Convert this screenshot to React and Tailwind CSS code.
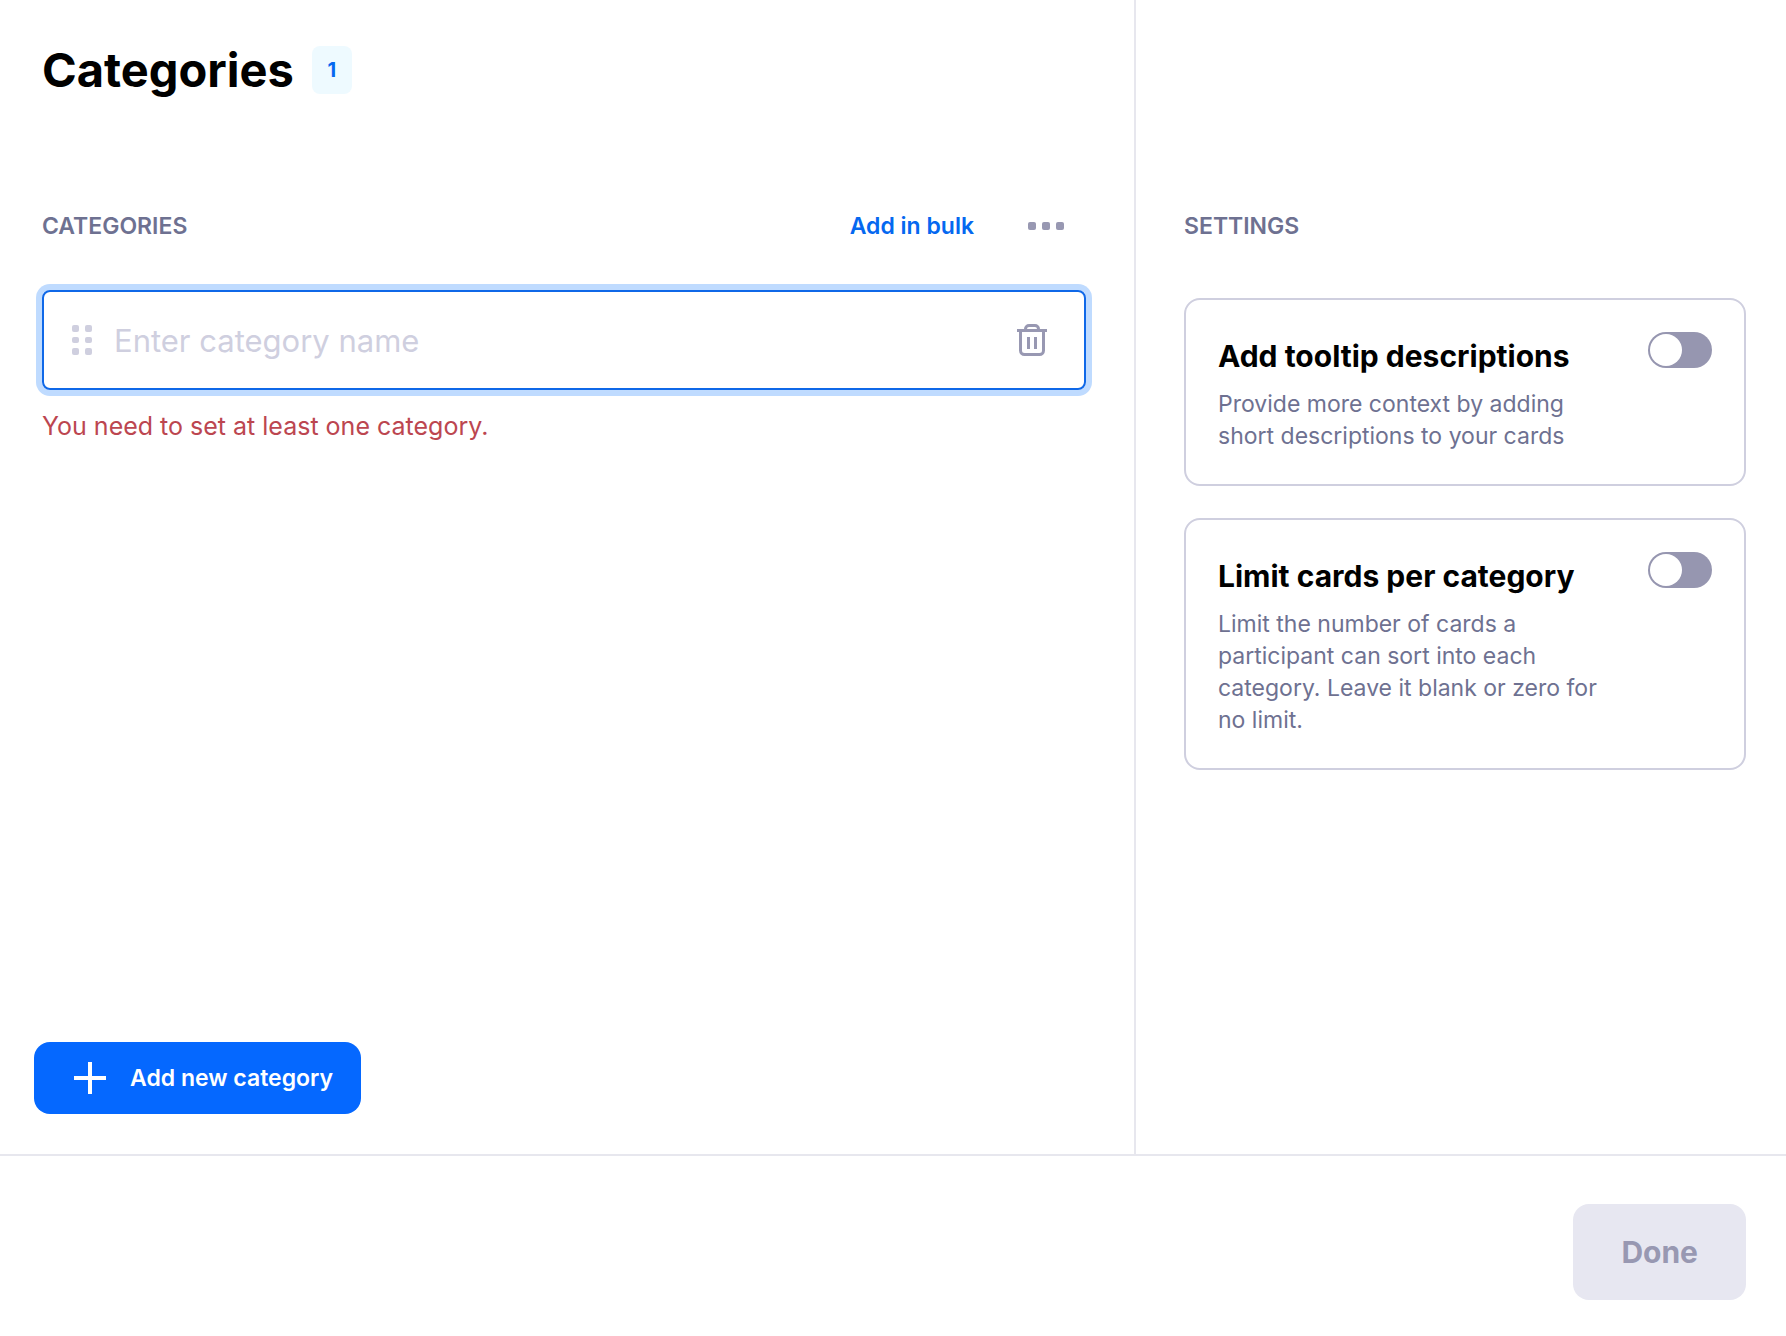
import React, { useState } from 'react';

const settings = [
  {
    id: 'tooltips',
    title: 'Add tooltip descriptions',
    description: 'Provide more context by adding short descriptions to your cards',
  },
  {
    id: 'limit',
    title: 'Limit cards per category',
    description:
      'Limit the number of cards a participant can sort into each category. Leave it blank or zero for no limit.',
  },
];

function DragHandle() {
  return (
    <svg width="20" height="30" viewBox="0 0 20 30" fill="#cfcfdf" aria-hidden="true">
      <rect x="0" y="0" width="7" height="7" rx="2" />
      <rect x="13" y="0" width="7" height="7" rx="2" />
      <rect x="0" y="12" width="7" height="6" rx="2" />
      <rect x="13" y="12" width="7" height="6" rx="2" />
      <rect x="0" y="23" width="7" height="7" rx="2" />
      <rect x="13" y="23" width="7" height="7" rx="2" />
    </svg>
  );
}

function TrashIcon() {
  return (
    <svg width="30" height="32" viewBox="0 0 30 32" fill="none" stroke="#9898b2" strokeWidth="3" aria-hidden="true">
      <path d="M0 6.5h30" />
      <path d="M8.5 6V5A3.5 3.5 0 0 1 12 1.5h6A3.5 3.5 0 0 1 21.5 5v1" />
      <path d="M3.5 6.5v20a4 4 0 0 0 4 4h15a4 4 0 0 0 4-4v-20" />
      <path d="M11.5 13v12M18.5 13v12" />
    </svg>
  );
}

function SettingCard({ id, title, description }) {
  const [enabled, setEnabled] = useState(false);

  return (
    <div className="flex items-start justify-between rounded-2xl border-2 border-[#cfcfdf] p-8">
      <div className="max-w-[392px]">
        <label htmlFor={id} className="mb-2 block text-[30px] leading-12 font-bold whitespace-nowrap text-black">
          {title}
        </label>
        <p className="text-[23px] leading-8 text-[#6e7191]">{description}</p>
      </div>
      <input
        id={id}
        type="checkbox"
        role="switch"
        checked={enabled}
        onChange={(e) => setEnabled(e.target.checked)}
        className="h-9 w-16 shrink-0 cursor-pointer appearance-none rounded-full bg-[#9696b0] p-0.5 before:block before:size-8 before:rounded-full before:bg-white checked:bg-[#0568ff] checked:before:ml-7"
      />
    </div>
  );
}

export default function App() {
  const [name, setName] = useState('');

  return (
    <div className="flex min-h-screen flex-col bg-white font-['Inter',sans-serif]">
      <div className="flex flex-1">
        <main className="flex min-w-0 flex-1 flex-col pt-10 pr-12 pb-10 pl-[42px]">
          <div className="flex h-15 items-center gap-[18px]">
            <h1 className="text-[47px] font-bold text-black">Categories</h1>
            <span className="flex h-12 w-10 items-center justify-center rounded-lg bg-[#eefaff] text-xl font-bold text-[#0568f0]">
              1
            </span>
          </div>

          <div className="mt-[102px] flex h-12 items-center">
            <h2 className="flex-1 text-[23px] font-semibold text-[#6e7191]">CATEGORIES</h2>
            <button type="button" className="text-[23px] font-semibold text-[#0568f0]">Add in bulk</button>
            <button type="button" aria-label="More options" className="mr-[22px] ml-[54px]">
              <svg width="36" height="8" viewBox="0 0 36 8" fill="#9898b2" aria-hidden="true">
                <rect x="0" width="8" height="8" rx="2" />
                <rect x="14" width="8" height="8" rx="2" />
                <rect x="28" width="8" height="8" rx="2" />
              </svg>
            </button>
          </div>

          <div className="mt-10 flex h-25 items-center rounded-lg border-2 border-[#0f68e8] pr-[37px] pl-7 ring-6 ring-[#bfdbff]">
            <DragHandle />
            <input
              type="text"
              aria-label="Category name"
              placeholder="Enter category name"
              value={name}
              onChange={(e) => setName(e.target.value)}
              className="ml-[22px] h-12 min-w-0 flex-1 text-[31px] text-black outline-none placeholder:text-[#cfcfdf]"
            />
            <button type="button" aria-label="Delete category">
              <TrashIcon />
            </button>
          </div>
          <p className="mt-5 text-[25px] leading-8 text-[#bc4650]">You need to set at least one category.</p>

          <button
            type="button"
            className="mt-auto -ml-2 flex h-18 items-center gap-6 self-start rounded-2xl bg-[#0568ff] pr-7 pl-10 text-[23px] font-semibold text-white"
          >
            <svg width="32" height="32" viewBox="0 0 32 32" stroke="currentColor" strokeWidth="4" aria-hidden="true">
              <path d="M16 0v32M0 16h32" />
            </svg>
            Add new category
          </button>
        </main>

        <aside className="w-[652px] shrink-0 border-l-2 border-[#e7e7ee] pt-[202px] pr-10 pl-12">
          <h2 className="flex h-12 items-center text-[23px] font-semibold text-[#6e7191]">SETTINGS</h2>
          <div className="mt-12 flex flex-col gap-8">
            {settings.map((s) => (
              <SettingCard key={s.id} {...s} />
            ))}
          </div>
        </aside>
      </div>

      <footer className="flex justify-end border-t-2 border-[#e7e7ee] pt-12 pr-10 pb-9">
        <button type="button" disabled className="h-24 rounded-2xl bg-[#e7e7f1] px-12 text-[30px] font-bold text-[#9898b2]">
          Done
        </button>
      </footer>
    </div>
  );
}
